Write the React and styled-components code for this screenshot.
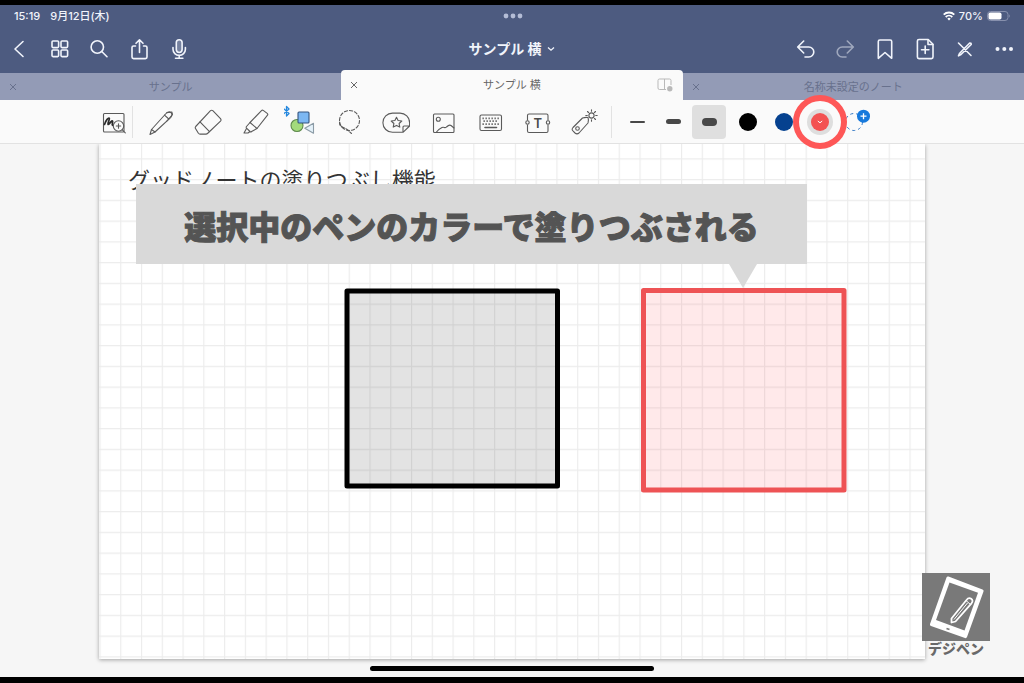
import styled, { createGlobalStyle } from "styled-components"

const GlobalStyle = createGlobalStyle`
  * {
    box-sizing: border-box;
  }
  body {
    margin: 0;
    background: #000;
    font-family: Inter, "Noto Sans CJK JP", sans-serif;
  }
  button {
    padding: 0;
    border: 0;
    background: none;
    color: inherit;
    font: inherit;
    cursor: pointer;
  }
  svg {
    display: block;
    flex: none;
  }
`

const NavIcon = ({ children }) => (
  <svg width="28" height="28" viewBox="0 0 28 28" fill="none" stroke="currentColor" strokeWidth="1.6" strokeLinecap="round" strokeLinejoin="round">
    {children}
  </svg>
)

const ToolIcon = ({ size = 28, children }) => (
  <svg width={size} height={size} viewBox={`0 0 ${size} ${size}`} fill="none" stroke="#5a5a5a" strokeWidth="1.1" strokeLinecap="round" strokeLinejoin="round">
    {children}
  </svg>
)

const Cross = () => (
  <svg width="8" height="8" viewBox="0 0 8 8" fill="none" stroke="currentColor" strokeWidth="1">
    <path d="M1 1l6 6M7 1L1 7" />
  </svg>
)

const leftActions = [
  { label: "戻る", icon: <path d="M17 6.5L9 14l8 7.5" /> },
  {
    label: "サムネイル",
    icon: (
      <>
        <rect x="6" y="6" width="6.6" height="6.6" rx="1" />
        <rect x="15" y="6" width="6.6" height="6.6" rx="1" />
        <rect x="6" y="15" width="6.6" height="6.6" rx="1" />
        <rect x="15" y="15" width="6.6" height="6.6" rx="1" />
      </>
    ),
  },
  {
    label: "検索",
    icon: (
      <>
        <circle cx="11.3" cy="12" r="6.2" />
        <path d="M16 16.7l5 5" />
      </>
    ),
  },
  { label: "共有", icon: <path d="M9.5 11H7.6A1.6 1.6 0 0 0 6 12.6V22a1.6 1.6 0 0 0 1.6 1.6h11.8A1.6 1.6 0 0 0 21 22v-9.4a1.6 1.6 0 0 0-1.6-1.6h-1.900M13.500 17.500V5M10 8.300L13.500 4.800 17 8.300" /> },
  {
    label: "録音",
    icon: (
      <>
        <rect x="10.3" y="4.7" width="5.8" height="12.8" rx="2.9" fill="currentColor" fillOpacity="0.25" />
        <path d="M7 12.5v1.7a6.2 6.2 0 0 0 12.4 0v-1.7M13.2 20.5v2.5M9.5 23.2h7.4" />
      </>
    ),
  },
]

const rightActions = [
  { label: "元に戻す", icon: <path d="M13.7 6l-6 6 6 6M8 12h10.8a5 5 0 0 1 0 10H15" /> },
  { label: "やり直す", dim: true, icon: <path d="M17.3 6l6 6-6 6M23 12H12.2a5 5 0 0 0 0 10H16" /> },
  { label: "ブックマーク", icon: <path d="M8.3 23.3V6.5A1.5 1.5 0 0 1 9.8 5h10.4a1.5 1.5 0 0 1 1.5 1.5v16.8L15 17.5z" /> },
  {
    label: "ページを追加",
    icon: (
      <>
        <path d="M9 4.5h9.2l4.8 4.800V22a1.600 1.600 0 0 1-1.600 1.600H9A1.600 1.600 0 0 1 7.400 22V6.100A1.600 1.600 0 0 1 9 4.500z" />
        <path d="M18 4.7v4.8h4.8M15.2 11v7.4M11.5 14.7h7.4" />
      </>
    ),
  },
  { label: "閲覧モード", icon: <path d="M8.5 8l12.500 12.500M8.500 20.800l1.200-2.600L19.700 8l1.300.2.200 1.300-10.200 10z" /> },
  {
    label: "その他",
    icon: (
      <g fill="currentColor" stroke="none">
        <circle cx="7.5" cy="14" r="2" />
        <circle cx="14.3" cy="14" r="2" />
        <circle cx="21" cy="14" r="2" />
      </g>
    ),
  },
]

const tools = [
  {
    label: "ペン",
    icon: (
      <>
        <path d="M3 26.5l1.5-5L19 5.500c1.500-1.800 3.600-2 4.900-.9s1.200 3.200-.3 5L8 24z" />
        <path d="M4.500 21.500L8 24M17.500 7.200l4.300 3.800M19.800 4.700l5-.7.700 2.500-6 7" />
      </>
    ),
  },
  {
    label: "消しゴム",
    icon: (
      <>
        <path d="M16.5 2.7q1.200-1 2.300 0l7.700 8q1 1.200 0 2.400L13.500 25.500q-.6.600-1.500.6H6q-1 0-1.600-.9L1.500 20.500q-.6-1 .2-2z" />
        <path d="M6 13.8l9.500 9.800" />
      </>
    ),
  },
  {
    label: "蛍光ペン",
    icon: (
      <>
        <path d="M20.5 2.6q.8-.8 1.700-.2l4 3q1 .8.300 1.800L16 20.500 9 14.500z" />
        <path d="M9 14.5l-3.500 4q-.6.800 0 1.600l3.500 3.400q.8.700 1.600 0L16 20.500M5.500 20.500L3 25h4l2-1.500" />
      </>
    ),
  },
  {
    label: "図形",
    size: 36,
    icon: (
      <>
        <path d="M0 5l5 4.500L2.500 12V2.500L5 5 0 9.500" stroke="#2487dd" strokeWidth="1.3" />
        <circle cx="13" cy="21.5" r="6" fill="#a3da7c" stroke="#5f8a4d" />
        <rect x="14" y="8" width="11" height="11" rx="1" fill="#7cb7f2" stroke="#35557f" />
        <path d="M20.8 24.3l8.7-5v10z" fill="#e4f1f9" stroke="#8b9ba6" />
      </>
    ),
  },
  {
    label: "なげなわ",
    icon: (
      <>
        <circle cx="14.5" cy="12.5" r="10" strokeDasharray="3.2 2" />
        <path d="M4.6 14c-1 5.500 5 5 7.500 7.500l4.400 4" strokeDasharray="3.5 1.5" />
      </>
    ),
  },
  {
    label: "ステッカー",
    icon: (
      <>
        <path d="M21 24.3H10.500a9.600 9.600 0 0 1 0-19.200h7.500a9.600 9.600 0 0 1 9.600 9.600v3.300zM27.600 18H22q-1 0-1 1v5.300" />
        <path d="M14.5 9.2l1.600 3.300 3.700.5-2.700 2.500.7 3.600-3.300-1.700-3.300 1.700.7-3.600-2.700-2.500 3.700-.5z" />
      </>
    ),
  },
  {
    label: "画像",
    icon: (
      <>
        <rect x="4.5" y="6" width="20.5" height="18.5" rx="1" />
        <circle cx="9.3" cy="11.3" r="2" />
        <path d="M7.500 24c1.500-2.500 3.500-3.500 5.500-4.500 2-1 3 1.200 4.500-.5 1.500-1.500 3-2.500 4.500-1.500l3 2.500" />
      </>
    ),
  },
  {
    label: "キーボード",
    icon: (
      <>
        <rect x="4" y="7" width="21.5" height="15.5" rx="1.5" />
        <path d="M6.5 10.3h17M7.5 13.2h15M6.5 16.1h17" strokeWidth="1.7" strokeDasharray="1.3 1.7" strokeLinecap="butt" />
        <path d="M9 19.5h11.5" strokeWidth="1.6" />
      </>
    ),
  },
  {
    label: "テキスト",
    icon: (
      <>
        <path d="M4.5 12V7.500q0-1.500 1.500-1.500h17.500q1.500 0 1.500 1.500V12M4.500 17v6q0 1.500 1.500 1.500h17.500q1.500 0 1.500-1.500v-6" />
        <circle cx="4.5" cy="14.5" r="1.7" />
        <circle cx="25" cy="14.5" r="1.7" />
        <text x="14.7" y="19.5" textAnchor="middle" fontFamily="Inter" fontSize="13" fontWeight="600" fill="#4a4a4a" stroke="none">T</text>
      </>
    ),
  },
  {
    label: "レーザーポインター",
    icon: (
      <>
        <path d="M3 19.5L12.500 10q3-1 5.500-.5 1 3 0 5.500L9 25q-2 1.800-4 0l-1.800-1.800q-2-1.700-.2-3.700z" />
        <circle cx="7.5" cy="20.5" r="1.8" />
        <circle cx="21.5" cy="7.5" r="2.6" />
        <path d="M21.5 1.8v1.500M21.500 11.700v1.500M15.800 7.500h1.500M25.700 7.500h1.500M17.500 3.500l1 1M24.500 10.500l1 1M25.500 3.500l-1 1" />
      </>
    ),
  },
]

const strokes = [
  { label: "細い", width: 2 },
  { label: "普通", width: 5 },
  { label: "太い", width: 8, selected: true },
]

const tabs = [
  { title: "サンプル" },
  { title: "サンプル 横", active: true },
  { title: "名称未設定のノート" },
]

const App = () => {
  return (
    <Screen>
      <GlobalStyle />
      <Header>
        <StatusBar>
          <StatusGroup>
            <span>15:19</span>
            <span>9月12日(木)</span>
          </StatusGroup>
          <svg width="20" height="6" viewBox="0 0 20 6" fill="#b4bdd6">
            <circle cx="3" cy="3" r="2.4" />
            <circle cx="10" cy="3" r="2.4" />
            <circle cx="17" cy="3" r="2.4" />
          </svg>
          <StatusGroup $end>
            <svg width="12" height="10" viewBox="0 0 12 10" fill="none" stroke="#fff" strokeWidth="1.8">
              <path d="M.7 3.7a7.500 7.500 0 0 1 10.600 0M2.700 6a4.700 4.700 0 0 1 6.600 0" />
              <path d="M6 9.5L4.300 7.700a2.400 2.400 0 0 1 3.400 0z" fill="#fff" stroke="none" />
            </svg>
            <span>70%</span>
            <svg width="24" height="10" viewBox="0 0 24 10">
              <rect x=".5" y=".5" width="20.5" height="9" rx="3" fill="none" stroke="#8790ad" />
              <rect x="1.5" y="1.5" width="13" height="7" rx="1.8" fill="#fff" />
              <path d="M22.3 3.3q1.500 1.700 0 3.400z" fill="#929bb5" />
            </svg>
          </StatusGroup>
        </StatusBar>
        <NavBar>
          <NavGroup>
            {leftActions.map((a) => (
              <NavButton key={a.label} aria-label={a.label}>
                <NavIcon>{a.icon}</NavIcon>
              </NavButton>
            ))}
          </NavGroup>
          <DocTitle>
            サンプル 横
            <svg width="8" height="6" viewBox="0 0 8 6" fill="none" stroke="currentColor" strokeWidth="1.3">
              <path d="M1 1.5l3 2.700 3-2.700" />
            </svg>
          </DocTitle>
          <NavGroup $end>
            {rightActions.map((a) => (
              <NavButton key={a.label} aria-label={a.label} $dim={a.dim}>
                <NavIcon>{a.icon}</NavIcon>
              </NavButton>
            ))}
          </NavGroup>
        </NavBar>
        <Tabs>
          {tabs.map((t) => (
            <Tab key={t.title} $active={t.active}>
              <TabClose aria-label="タブを閉じる">
                <Cross />
              </TabClose>
              <TabTitle>{t.title}</TabTitle>
              {t.active && (
                <svg width="16" height="14" viewBox="0 0 16 14" fill="none" stroke="#b9b9b9">
                  <path d="M9 11.5H2.500q-1.500 0-1.500-1.500V2.500Q1 1 2.500 1h10Q14 1 14 2.500V7M7.500 1v10.500" />
                  <circle cx="12.8" cy="10.8" r="2.7" fill="#b9b9b9" stroke="none" />
                </svg>
              )}
            </Tab>
          ))}
        </Tabs>
      </Header>

      <Toolbar>
        <ToolButton $width={28} aria-label="ズーム">
          <ToolIcon>
            <rect x="3.5" y="5.5" width="20.5" height="18.5" rx="1" />
            <path d="M4.500 16.500C6 12 8.300 9.500 9.300 10.200S7.300 15 8 16.200s3.700-4.200 4.500-3.200-1.300 4.200.5 4.500" stroke="#2b2b2b" strokeWidth="1.7" />
            <circle cx="18.5" cy="18" r="5.2" fill="#fafafa" />
            <path d="M18.5 15.8v4.400M16.300 18h4.400M22.300 21.800l3 3" />
          </ToolIcon>
        </ToolButton>
        <Divider />
        {tools.map((t) => (
          <ToolButton key={t.label} aria-label={t.label}>
            <ToolIcon size={t.size}>{t.icon}</ToolIcon>
          </ToolButton>
        ))}
        <Divider />
        <PenGroup>
          {strokes.map((s) => (
            <StrokeButton key={s.label} aria-label={s.label} $selected={s.selected}>
              <StrokeLine $width={s.width} />
            </StrokeButton>
          ))}
        </PenGroup>
        <PenGroup>
          <ColorButton aria-label="黒">
            <Swatch $color="#000" />
          </ColorButton>
          <ColorButton aria-label="青">
            <Swatch $color="#05418f" />
          </ColorButton>
          <ColorButton aria-label="赤">
            <Swatch $color="#f35252" $selected>
              <svg width="6" height="4" viewBox="0 0 6 4" fill="none" stroke="#fff">
                <path d="M.8 1L3 2.800 5.200 1" />
              </svg>
            </Swatch>
            <Highlight />
          </ColorButton>
          <ColorButton aria-label="色を追加">
            <svg width="36" height="36" viewBox="0 0 36 36" fill="none">
              <circle cx="16" cy="18" r="8.5" stroke="#2f76c4" strokeDasharray="3 3" />
              <circle cx="25.5" cy="12.2" r="6.5" fill="#1679dc" />
              <path d="M25.5 9.2v6M22.500 12.200h6" stroke="#fff" strokeWidth="1.3" />
            </svg>
          </ColorButton>
        </PenGroup>
      </Toolbar>

      <Workspace>
        <Page>
          <svg width="100%" viewBox="0 0 826 515">
            <defs>
              <pattern id="grid" x="21.2" y="14.3" width="20.77" height="20.75" patternUnits="userSpaceOnUse">
                <path d="M.5 0v20.750M0 .5h20.770" stroke="#ececec" strokeWidth="1.3" />
              </pattern>
            </defs>
            <rect width="826" height="515" fill="url(#grid)" />
            <g strokeWidth="5" strokeLinejoin="round">
              <rect x="248" y="147" width="210.5" height="195" fill="rgba(0,0,0,.11)" stroke="#000" />
              <rect x="544.5" y="146.5" width="200.5" height="199.5" fill="rgba(255,40,50,.1)" stroke="#ee5355" />
            </g>
          </svg>
          <Note>グッドノートの塗りつぶし機能</Note>
          <Callout>選択中のペンのカラーで塗りつぶされる</Callout>
        </Page>
        <HomeIndicator />
        <Brand>
          <svg width="68" height="68" viewBox="0 0 68 68">
            <rect width="68" height="68" fill="#797979" />
            <path d="M26.5 3.500L60.500 16.500q1.500.6 1 2L45 64q-.6 1.500-2 1L9 53q-1.500-.6-1-2L24.500 4.500q.6-1.500 2-1z" fill="#fff" />
            <path d="M27.5 9.500L56 19.800 42.500 57.500 14 47z" fill="#797979" />
            <path d="M24.500 55.500l3 1" stroke="#797979" strokeWidth="1.8" />
            <path d="M29.500 45.500l15-18.500q2.200-3 4.700-1.200t.3 4.500L33.500 48.500l-4 1z" fill="#797979" stroke="#fff" strokeWidth="1.8" strokeLinejoin="round" />
            <path d="M32 46.500l13.500-16.500M44 27.500l4.500 4" stroke="#fff" strokeWidth="1" />
          </svg>
          デジペン
        </Brand>
      </Workspace>
    </Screen>
  )
}

export default App

const Screen = styled.div`
  display: flex;
  flex-direction: column;
  min-height: 100vh;
  border-top: 5px solid #000;
  border-bottom: 6px solid #000;
  background: #f6f6f6;
`

const Header = styled.header`
  background: #4d5b80;
  color: #f1f4fb;
`

const StatusBar = styled.div`
  display: grid;
  grid-template-columns: 1fr auto 1fr;
  align-items: center;
  height: 22px;
  padding: 0 13px 0 14px;
  font-size: 11px;
  font-weight: 500;
  line-height: 16px;
`

const StatusGroup = styled.div`
  display: flex;
  align-items: center;
  justify-content: ${(p) => (p.$end ? "flex-end" : "flex-start")};
  gap: ${(p) => (p.$end ? 4 : 10)}px;
`

const NavBar = styled.nav`
  display: grid;
  grid-template-columns: 1fr auto 1fr;
  align-items: center;
  height: 43px;
`

const NavGroup = styled.div`
  display: flex;
  justify-content: ${(p) => (p.$end ? "flex-end" : "flex-start")};
`

const NavButton = styled.button`
  display: flex;
  align-items: center;
  justify-content: center;
  width: 40px;
  height: 40px;
  opacity: ${(p) => (p.$dim ? 0.5 : 1)};
`

const DocTitle = styled.button`
  display: flex;
  align-items: center;
  gap: 6px;
  font-size: 14px;
  font-weight: 700;
  line-height: 24px;
`

const Tabs = styled.div`
  display: flex;
  align-items: flex-end;
`

const Tab = styled.div`
  display: grid;
  grid-template-columns: 26px 1fr 26px;
  align-items: center;
  flex: 1;
  height: ${(p) => (p.$active ? 30 : 27)}px;
  border-radius: ${(p) => (p.$active ? "4px 4px 0 0" : "0")};
  background: ${(p) => (p.$active ? "#fafafa" : "#939bb6")};
  color: ${(p) => (p.$active ? "#666" : "#68718d")};
`

const TabClose = styled.button`
  display: flex;
  align-items: center;
  justify-content: center;
  height: 24px;
`

const TabTitle = styled.span`
  font-size: 11px;
  line-height: 16px;
  text-align: center;
`

const Toolbar = styled.div`
  display: flex;
  align-items: center;
  height: 44px;
  padding-left: 100px;
  border-bottom: 1px solid #e2e2e2;
  background: #fafafa;
`

const ToolButton = styled.button`
  display: flex;
  align-items: center;
  justify-content: center;
  width: ${(p) => p.$width || 47}px;
  height: 40px;
`

const Divider = styled.div`
  width: 1px;
  height: 32px;
  margin: 0 4px;
  background: #e2e2e2;
`

const PenGroup = styled.div`
  display: flex;
  margin-left: 3px;
`

const StrokeButton = styled.button`
  display: flex;
  align-items: center;
  justify-content: center;
  width: 34px;
  height: 34px;
  margin: 0 1px;
  border-radius: 4px;
  background: ${(p) => (p.$selected ? "#dfdfdf" : "none")};
`

const StrokeLine = styled.span`
  width: 15px;
  height: ${(p) => p.$width}px;
  border-radius: 4px;
  background: #484848;
`

const ColorButton = styled.button`
  position: relative;
  display: flex;
  align-items: center;
  justify-content: center;
  width: 36px;
  height: 36px;
`

const Swatch = styled.span`
  display: flex;
  align-items: center;
  justify-content: center;
  width: 18px;
  height: 18px;
  border-radius: 50%;
  background: ${(p) => p.$color};
  box-shadow: ${(p) => (p.$selected ? "0 0 0 4px #dedede" : "none")};
`

/* ring that marks the current pen colour */
const Highlight = styled.span`
  position: absolute;
  z-index: 1;
  inset: -9px;
  border: 6px solid #fe5757;
  border-radius: 50%;
`

const Workspace = styled.main`
  position: relative;
  flex: 1;
`

const Page = styled.section`
  position: relative;
  margin: 0 99px;
  background: #fff;
  box-shadow: 0 1px 4px rgba(0, 0, 0, 0.35);
  clip-path: inset(0 -8px -8px -8px);
`

const Note = styled.p`
  position: absolute;
  top: 20px;
  left: 29px;
  margin: 0;
  color: #333;
  font-size: 22px;
  line-height: 32px;
  white-space: nowrap;
`

const Callout = styled.div`
  position: absolute;
  top: 40px;
  left: 37px;
  width: 671px;
  height: 80px;
  padding-top: 4px;
  background: #d9d9d9;
  color: #545454;
  font-size: 32px;
  font-weight: 900;
  line-height: 80px;
  text-align: center;
  white-space: nowrap;
  -webkit-text-stroke: 1px #545454;

  &::after {
    content: "";
    position: absolute;
    top: 100%;
    right: 50px;
    border: 14px solid transparent;
    border-top: 24px solid #d9d9d9;
    border-bottom: 0;
  }
`

const HomeIndicator = styled.div`
  width: 284px;
  height: 5px;
  margin: 7px auto 6px;
  border-radius: 3px;
  background: #000;
`

const Brand = styled.div`
  position: absolute;
  right: 34px;
  bottom: 20px;
  color: #696969;
  font-size: 14px;
  font-weight: 900;
  line-height: 16px;
  text-align: center;
`
